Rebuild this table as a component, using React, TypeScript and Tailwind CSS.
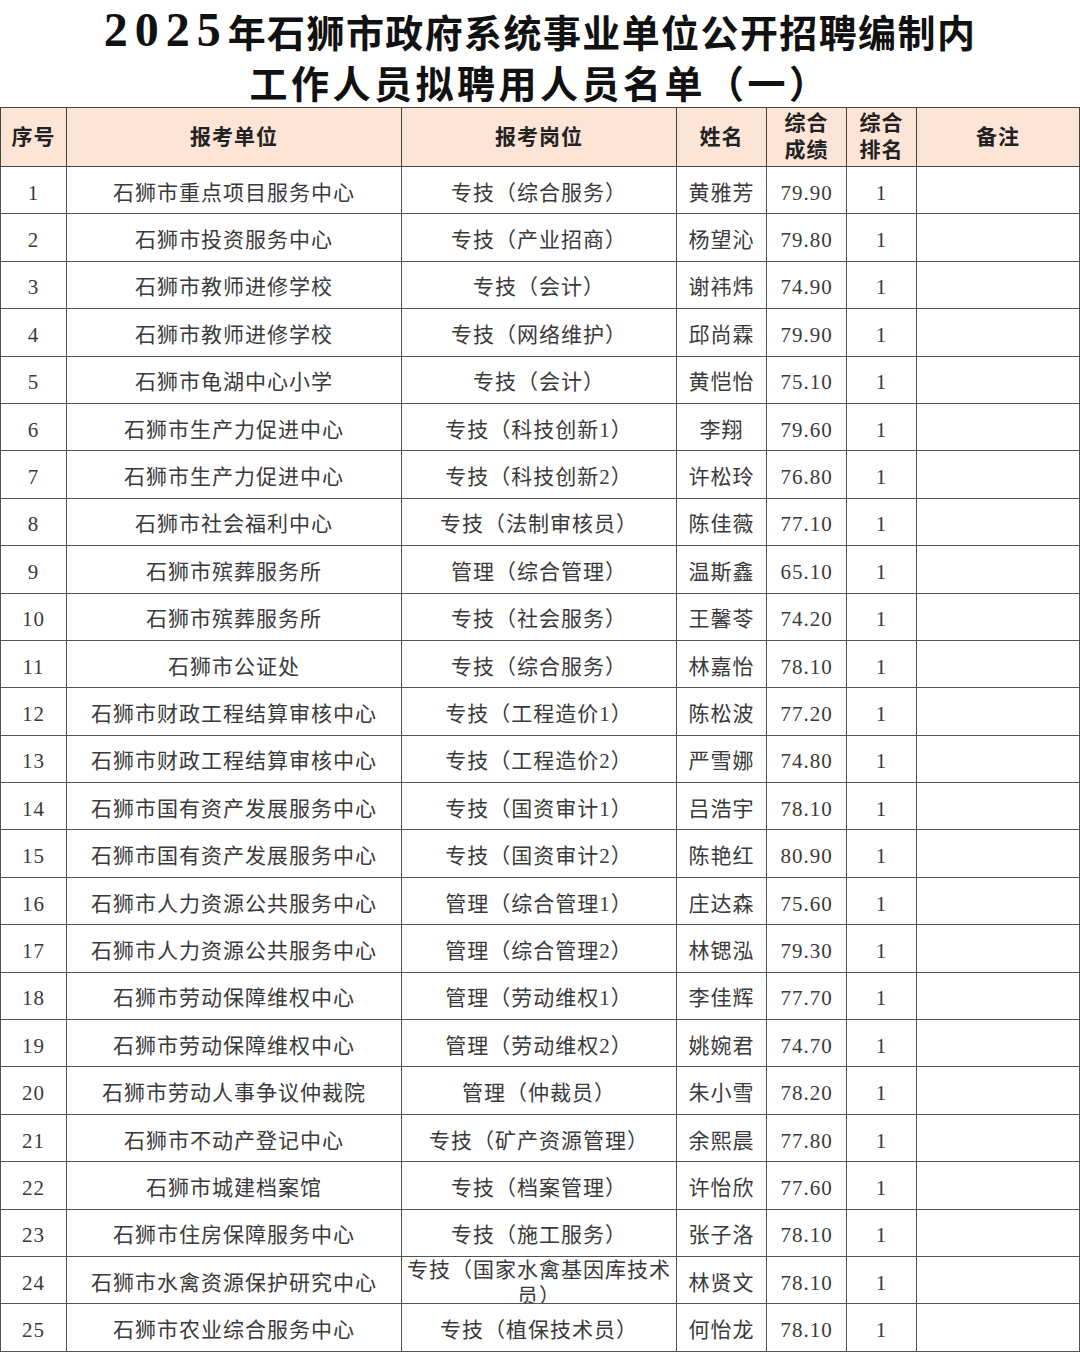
import React from "react";

const rows: [string, string, string, string][] = [
  ["石狮市重点项目服务中心", "专技（综合服务）", "黄雅芳", "79.90"],
  ["石狮市投资服务中心", "专技（产业招商）", "杨望沁", "79.80"],
  ["石狮市教师进修学校", "专技（会计）", "谢祎炜", "74.90"],
  ["石狮市教师进修学校", "专技（网络维护）", "邱尚霖", "79.90"],
  ["石狮市龟湖中心小学", "专技（会计）", "黄恺怡", "75.10"],
  ["石狮市生产力促进中心", "专技（科技创新1）", "李翔", "79.60"],
  ["石狮市生产力促进中心", "专技（科技创新2）", "许松玲", "76.80"],
  ["石狮市社会福利中心", "专技（法制审核员）", "陈佳薇", "77.10"],
  ["石狮市殡葬服务所", "管理（综合管理）", "温斯鑫", "65.10"],
  ["石狮市殡葬服务所", "专技（社会服务）", "王馨苓", "74.20"],
  ["石狮市公证处", "专技（综合服务）", "林嘉怡", "78.10"],
  ["石狮市财政工程结算审核中心", "专技（工程造价1）", "陈松波", "77.20"],
  ["石狮市财政工程结算审核中心", "专技（工程造价2）", "严雪娜", "74.80"],
  ["石狮市国有资产发展服务中心", "专技（国资审计1）", "吕浩宇", "78.10"],
  ["石狮市国有资产发展服务中心", "专技（国资审计2）", "陈艳红", "80.90"],
  ["石狮市人力资源公共服务中心", "管理（综合管理1）", "庄达森", "75.60"],
  ["石狮市人力资源公共服务中心", "管理（综合管理2）", "林锶泓", "79.30"],
  ["石狮市劳动保障维权中心", "管理（劳动维权1）", "李佳辉", "77.70"],
  ["石狮市劳动保障维权中心", "管理（劳动维权2）", "姚婉君", "74.70"],
  ["石狮市劳动人事争议仲裁院", "管理（仲裁员）", "朱小雪", "78.20"],
  ["石狮市不动产登记中心", "专技（矿产资源管理）", "余熙晨", "77.80"],
  ["石狮市城建档案馆", "专技（档案管理）", "许怡欣", "77.60"],
  ["石狮市住房保障服务中心", "专技（施工服务）", "张子洛", "78.10"],
  ["石狮市水禽资源保护研究中心", "专技（国家水禽基因库技术员）", "林贤文", "78.10"],
  ["石狮市农业综合服务中心", "专技（植保技术员）", "何怡龙", "78.10"],
];

function Cell({ children, first }: { children?: React.ReactNode; first?: boolean }) {
  return (
    <div
      className={`h-[47.4px] overflow-hidden flex items-center justify-center text-center px-1 pt-[5px] border-r border-b border-[#555] ${
        first ? "border-l" : ""
      }`}
    >
      <div className="leading-[26px]">{children}</div>
    </div>
  );
}

function HCell({ children, first }: { children?: React.ReactNode; first?: boolean }) {
  return (
    <div
      className={`h-[60px] flex items-center justify-center text-center bg-[#fce4d6] border-t border-r border-b border-[#444] font-bold text-[#222] ${
        first ? "border-l" : ""
      }`}
    >
      <div className="leading-[27px]">{children}</div>
    </div>
  );
}

export default function App() {
  return (
    <div className="w-[1080px] bg-white font-['Liberation_Serif','Noto_Sans_CJK_SC',serif]">
      <div className="h-[107px] pt-[5px] flex flex-col items-center text-[#111] font-bold">
        <div className="h-[50px] flex items-center whitespace-nowrap">
          <span className="text-[48px] tracking-[7px] font-bold">2025</span>
          <span className="text-[38px] tracking-[1.4px] font-['Noto_Sans_CJK_SC',sans-serif]">
            年石狮市政府系统事业单位公开招聘编制内
          </span>
        </div>
        <div className="h-[52px] flex items-center whitespace-nowrap text-[38px] tracking-[3.5px] font-['Noto_Sans_CJK_SC',sans-serif]">
          工作人员拟聘用人员名单（一）
        </div>
      </div>
      <div className="grid grid-cols-[67px_335px_275px_90px_80px_70px_163px] text-[21px] tracking-[1px] text-[#3a3a3a]">
        <HCell first>序号</HCell>
        <HCell>报考单位</HCell>
        <HCell>报考岗位</HCell>
        <HCell>姓名</HCell>
        <HCell>
          综合
          <br />
          成绩
        </HCell>
        <HCell>
          综合
          <br />
          排名
        </HCell>
        <HCell>备注</HCell>
        {rows.map((r, i) => (
          <React.Fragment key={i}>
            <Cell first>{i + 1}</Cell>
            <Cell>{r[0]}</Cell>
            <Cell>{r[1]}</Cell>
            <Cell>{r[2]}</Cell>
            <Cell>{r[3]}</Cell>
            <Cell>1</Cell>
            <Cell />
          </React.Fragment>
        ))}
      </div>
    </div>
  );
}
